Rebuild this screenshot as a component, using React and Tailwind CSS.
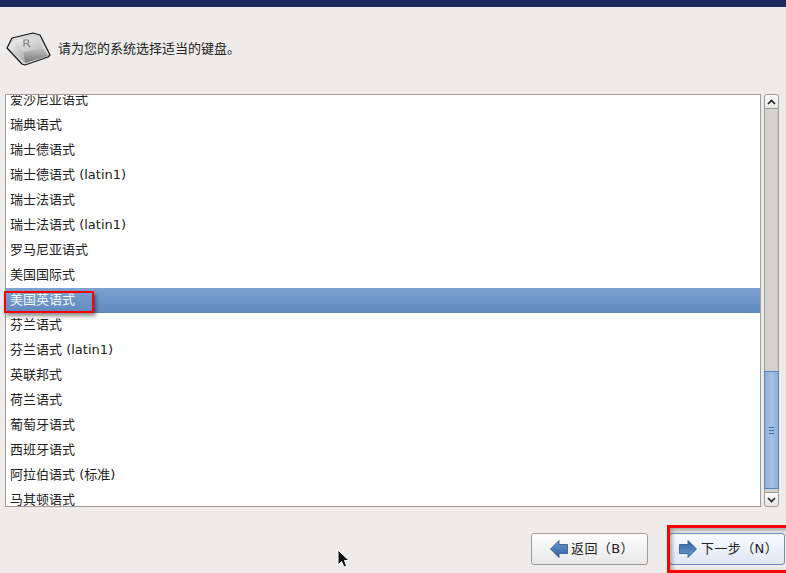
const rows = [
  '爱沙尼亚语式',
  '瑞典语式',
  '瑞士德语式',
  '瑞士德语式 (latin1)',
  '瑞士法语式',
  '瑞士法语式 (latin1)',
  '罗马尼亚语式',
  '美国国际式',
  '美国英语式',
  '芬兰语式',
  '芬兰语式 (latin1)',
  '英联邦式',
  '荷兰语式',
  '葡萄牙语式',
  '西班牙语式',
  '阿拉伯语式 (标准)',
  '马其顿语式',
];

function KeyIcon() {
  return (
    <svg width="46" height="36" viewBox="0 0 46 36" className="shrink-0 mt-[3px]">
      <defs>
        <linearGradient id="keyTop" x1="0" y1="0" x2="1" y2="1">
          <stop offset="0" stopColor="#efefef" />
          <stop offset="1" stopColor="#bcbcbc" />
        </linearGradient>
        <linearGradient id="keyFront" x1="0" y1="0" x2="0" y2="1">
          <stop offset="0" stopColor="#c4c4c4" />
          <stop offset="1" stopColor="#747474" />
        </linearGradient>
        <linearGradient id="keyLeft" x1="0" y1="0" x2="1" y2="1">
          <stop offset="0" stopColor="#f8f8f8" />
          <stop offset="1" stopColor="#a8a8a8" />
        </linearGradient>
      </defs>
      <path d="M1 16 L6 6 L27 1 L34 3 L44 23 L42 25 L19 33 L16 32 Z" fill="#d9d9d9" />
      <path d="M9 8 L32 5 L37 16 L17 20 Z" fill="url(#keyTop)" />
      <path d="M17 20 L37 16 L42 24 L19 31 Z" fill="url(#keyFront)" />
      <path d="M2 16 L9 8 L17 20 L19 31 Z" fill="url(#keyLeft)" />
      <path d="M1 16 L6 6 L27 1 L34 3 L44 23 L42 25 L19 33 L16 32 Z" fill="none" stroke="#151515" strokeWidth="1.2" strokeLinejoin="round" />
      <path d="M18 15 V8 H22 Q24 10 21 11.5 L24 15 M18 11.5 H21" fill="none" stroke="#808080" strokeWidth="1.2" />
    </svg>
  );
}

function ArrowIcon({ left }) {
  return (
    <svg width="18" height="18" viewBox="0 0 18 18" className={`shrink-0 ${left ? '' : 'rotate-180'}`}>
      <defs>
        <linearGradient id="arrowFill" x1="0" y1="0" x2="0" y2="1">
          <stop offset="0" stopColor="#6f9bd0" />
          <stop offset="1" stopColor="#2f5f9f" />
        </linearGradient>
      </defs>
      <path d="M0.5 9 L9 0.5 V4.5 H17.5 V13.5 H9 V17.5 Z" fill="url(#arrowFill)" stroke="#2c5288" strokeWidth="0.8" strokeLinejoin="round" />
    </svg>
  );
}

function ScrollStep({ up }) {
  return (
    <div className={`h-[15px] bg-gradient-to-b from-[#fbfbfb] to-[#e6e6e6] border border-[#9b9b98] flex items-center justify-center ${up ? 'rounded-t-[3px]' : 'rounded-b-[3px]'}`}>
      <svg width="9" height="6" viewBox="0 0 9 6">
        <path d={up ? 'M1 5 L4.5 1.5 L8 5' : 'M1 1 L4.5 4.5 L8 1'} fill="none" stroke="#222" strokeWidth="1.6" />
      </svg>
    </div>
  );
}

export default function App() {
  return (
    <div className="relative w-[786px] h-[573px] overflow-hidden bg-[#edeceb] text-[13px] text-[#222] font-['Liberation_Sans','Noto_Sans_CJK_SC',sans-serif]">
      <div className="h-[7px] bg-[#1e2a5c]" />

      <div className="h-[87px] flex items-center pl-[6px] pb-[4px] gap-[6px]">
        <KeyIcon />
        <span className="font-['DejaVu_Sans','Noto_Sans_CJK_SC',sans-serif] text-[13px]">请为您的系统选择适当的键盘。</span>
      </div>

      <div className="flex h-[413px] pl-[5px] pr-[7px] gap-[3px]">
        <div className="w-[757px] bg-white border border-[#9d9c9a] overflow-hidden">
          <div className="-mt-[7px]">
            {rows.map((row) => (
              <div
                key={row}
                className={`h-[25px] pl-[4px] pb-[1px] flex items-center whitespace-nowrap font-['DejaVu_Sans','Noto_Sans_CJK_SC',sans-serif] text-[13px] ${
                  row === '美国英语式' ? 'bg-gradient-to-b from-[#7da3d2] to-[#5f88bd] text-[#f4f6fa]' : ''
                }`}
              >
                {row}
              </div>
            ))}
          </div>
        </div>

        <div className="w-[15px] flex flex-col">
          <ScrollStep up />
          <div className="flex-1 flex flex-col justify-end bg-[#d3d2cf] border-x border-[#9b9b98] pb-[3px]">
            <div className="h-[118px] -mx-px bg-gradient-to-r from-[#8fb0dc] via-[#a5c1e6] to-[#8fb0dc] border border-[#5f82b5] flex flex-col items-center justify-center gap-[2px]">
              <div className="w-[5px] h-px bg-[#45689c]" />
              <div className="w-[5px] h-px bg-[#45689c]" />
              <div className="w-[5px] h-px bg-[#45689c]" />
            </div>
          </div>
          <ScrollStep />
        </div>
      </div>

      <div className="flex justify-end items-start gap-[21px] pt-[26px] pr-px">
        <button className="w-[117px] h-[32px] pl-[18px] rounded-[3px] border border-[#9f9e9c] bg-gradient-to-b from-[#fdfdfd] to-[#e8e8e8] flex items-center gap-[3px] font-['DejaVu_Sans','Noto_Sans_CJK_SC',sans-serif] text-[13px] tracking-[0.4px]">
          <ArrowIcon left />
          <span>返回（B）</span>
        </button>
        <button className="w-[116px] h-[32px] pl-[9px] rounded-[3px] border border-[#6d8fc0] bg-gradient-to-b from-[#f8fafe] to-[#dfe7f3] flex items-center gap-[4px] font-['DejaVu_Sans','Noto_Sans_CJK_SC',sans-serif] text-[13px] tracking-[0.4px]">
          <ArrowIcon />
          <span>下一步（N）</span>
        </button>
      </div>

      {/* red annotations drawn over the screenshot */}
      <div className="absolute left-[4px] top-[291px] w-[90px] h-[22px] border-2 border-[#fa0000] shadow-[2px_3px_4px_rgba(0,0,0,0.45)]" />
      <div className="absolute left-[667px] top-[525px] w-[125px] h-[48px] border-[3px] border-[#fa0000] shadow-[inset_2px_2px_4px_rgba(0,0,0,0.35)]" />

      <svg width="14" height="20" viewBox="0 0 14 20" className="absolute left-[336px] top-[549px]">
        <path d="M2 1 V16 L5.5 12.5 L8 18 L10.5 17 L8.5 11.5 H13 Z" fill="#111" stroke="#fff" strokeWidth="1" />
      </svg>
    </div>
  );
}
